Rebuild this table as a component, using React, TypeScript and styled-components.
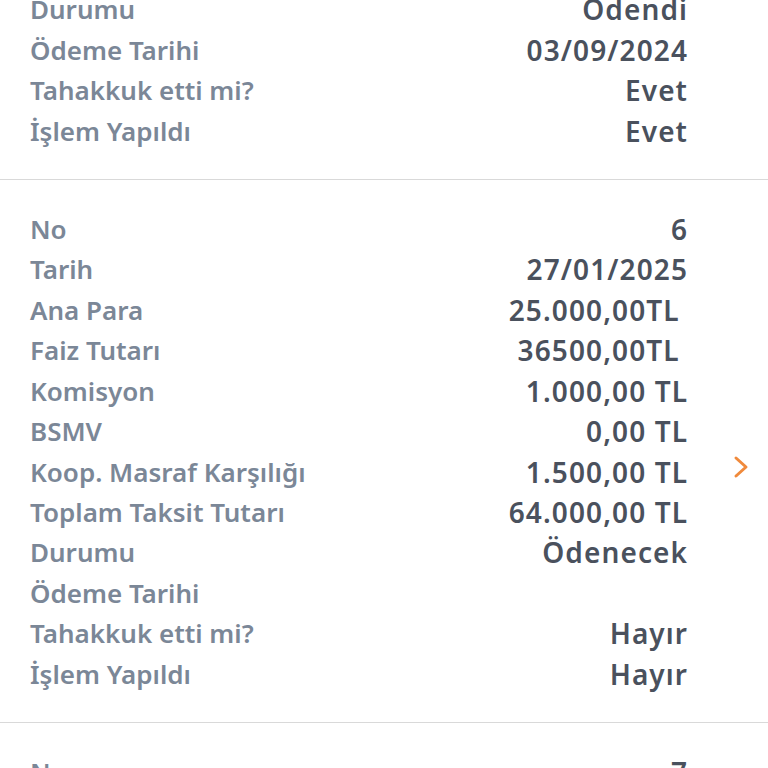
import React from "react";
import styled, { createGlobalStyle } from "styled-components";

const GlobalStyle = createGlobalStyle`
  html, body {
    margin: 0;
    padding: 0;
    background: #ffffff;
    overflow: hidden;
  }
  body {
    font-family: "Noto Sans", "Open Sans", sans-serif;
  }
`;

const List = styled.div`
  display: flex;
  flex-direction: column;
  width: 768px;
`;

const Card = styled.div<{ $first?: boolean }>`
  display: flex;
  align-items: stretch;
  padding: ${(p) => (p.$first ? "0" : "29px")} 0 28px 30px;
  margin-top: ${(p) => (p.$first ? "-11px" : "0")};
  border-bottom: 1px solid #d9d9d9;
`;

const Rows = styled.div`
  flex: 1;
  display: flex;
  flex-direction: column;
`;

const Row = styled.div`
  display: flex;
  justify-content: space-between;
  align-items: center;
  height: 40.45px;
  font-weight: 600;
`;

const Label = styled.span`
  color: #7b8797;
  font-size: 26px;
  white-space: nowrap;
`;

const Value = styled.span`
  color: #4a515d;
  font-size: 28px;
  letter-spacing: 1.1px;
  margin-right: -1.1px;
  white-space: pre;
  text-align: right;
`;

const ChevronCell = styled.div<{ $visible: boolean }>`
  width: 81px;
  display: flex;
  align-items: center;
  justify-content: flex-start;
  padding-left: 46px;
  padding-top: 31px;
  box-sizing: border-box;
  visibility: ${(p) => (p.$visible ? "visible" : "hidden")};
`;

const Chevron = () => (
  <svg width="16" height="24" viewBox="0 0 16 24" fill="none">
    <path
      d="M3 3 L13 12 L3 21"
      stroke="#f08a3c"
      strokeWidth="3"
      strokeLinecap="round"
      strokeLinejoin="round"
    />
  </svg>
);

type Item = [string, string];

const cards: { rows: Item[]; first?: boolean; chevron: boolean }[] = [
  {
    first: true,
    chevron: false,
    rows: [
      ["Durumu", "Ödendi"],
      ["Ödeme Tarihi", "03/09/2024"],
      ["Tahakkuk etti mi?", "Evet"],
      ["İşlem Yapıldı", "Evet"],
    ],
  },
  {
    chevron: true,
    rows: [
      ["No", "6"],
      ["Tarih", "27/01/2025"],
      ["Ana Para", "25.000,00TL "],
      ["Faiz Tutarı", "36500,00TL "],
      ["Komisyon", "1.000,00 TL"],
      ["BSMV", "0,00 TL"],
      ["Koop. Masraf Karşılığı", "1.500,00 TL"],
      ["Toplam Taksit Tutarı", "64.000,00 TL"],
      ["Durumu", "Ödenecek"],
      ["Ödeme Tarihi", ""],
      ["Tahakkuk etti mi?", "Hayır"],
      ["İşlem Yapıldı", "Hayır"],
    ],
  },
  {
    chevron: false,
    rows: [
      ["No", "7"],
      ["Tarih", "27/02/2025"],
    ],
  },
];

export default function App() {
  return (
    <>
      <GlobalStyle />
      <List>
        {cards.map((c, i) => (
          <Card key={i} $first={c.first}>
            <Rows>
              {c.rows.map(([l, v], j) => (
                <Row key={j}>
                  <Label>{l}</Label>
                  <Value>{v}</Value>
                </Row>
              ))}
            </Rows>
            <ChevronCell $visible={c.chevron}>
              <Chevron />
            </ChevronCell>
          </Card>
        ))}
      </List>
    </>
  );
}
